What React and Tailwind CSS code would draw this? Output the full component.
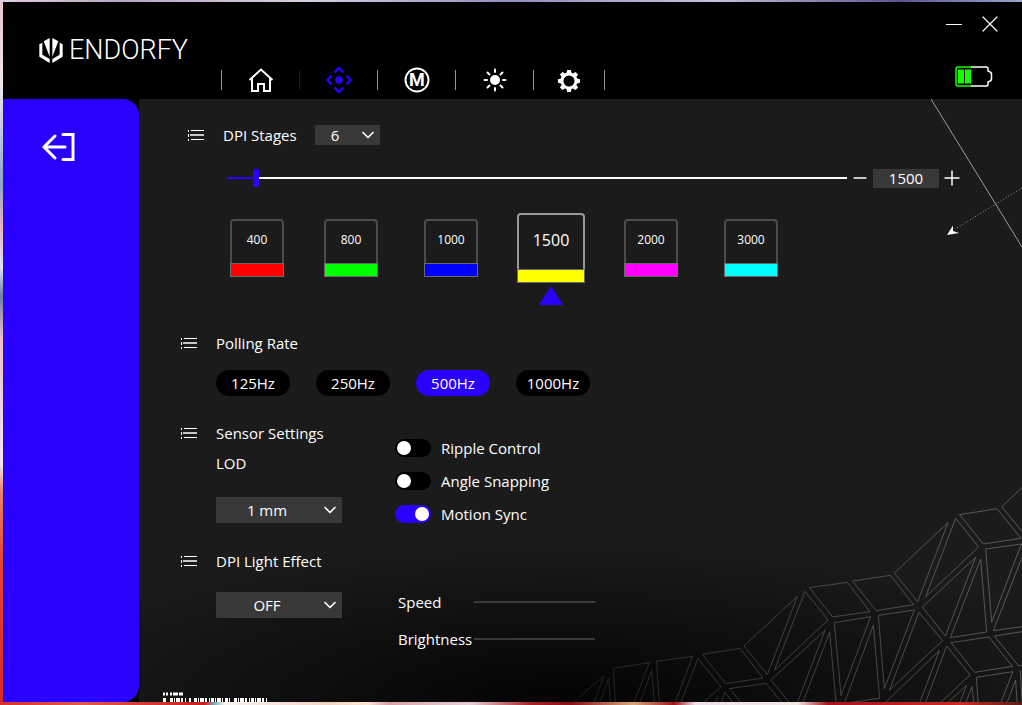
import { useState } from 'react';
import { ChevronDown, Minus, Plus, X } from 'lucide-react';
import clsx from 'clsx';

const STAGES = [
  { dpi: 400, color: 'bg-[#ff0000]' },
  { dpi: 800, color: 'bg-[#00ff00]' },
  { dpi: 1000, color: 'bg-[#0000ff]' },
  { dpi: 1500, color: 'bg-[#ffff00]' },
  { dpi: 2000, color: 'bg-[#ff00ff]' },
  { dpi: 3000, color: 'bg-[#00ffff]' },
];

const RATES = [125, 250, 500, 1000];

const SENSOR_OPTIONS = ['Ripple Control', 'Angle Snapping', 'Motion Sync'];

const TABS = [
  { id: 'home', label: 'Home', icon: HomeIcon, width: 'w-[77px]' },
  { id: 'dpi', label: 'DPI', icon: DpiIcon, width: 'w-[77px]' },
  { id: 'macro', label: 'Macro', icon: MacroIcon, width: 'w-[77px]' },
  { id: 'light', label: 'Lighting', icon: SunIcon, width: 'w-[77px]' },
  { id: 'settings', label: 'Settings', icon: GearIcon, width: 'w-[70px]' },
];

const MIN_DPI = 400;
const MAX_DPI = 26000;

export default function App() {
  const [tab, setTab] = useState('dpi');
  const [stageCount, setStageCount] = useState('6');
  const [stage, setStage] = useState(3);
  const [dpi, setDpi] = useState(1500);
  const [rate, setRate] = useState(500);
  const [sensor, setSensor] = useState({ 'Motion Sync': true });
  const [lod, setLod] = useState('1 mm');
  const [effect, setEffect] = useState('OFF');

  const pct = ((dpi - MIN_DPI) / (MAX_DPI - MIN_DPI)) * 100;

  const pickStage = (i) => {
    setStage(i);
    setDpi(STAGES[i].dpi);
  };

  return (
    <div className="flex min-h-screen flex-col font-['Open_Sans','Noto_Sans',sans-serif] text-[15px] leading-5 text-white">
      <div className="h-[2px] bg-[linear-gradient(to_right,#e0cfe0,#b7a6c4_12%,#d9cfe4_30%,#8f8fc0_50%,#c7c0dd_70%,#5a5590_88%,#9aa5d0)]" />
      <div className="flex flex-1">
        <div className="w-[3px] bg-[linear-gradient(to_bottom,#e9c6d8,#f0e6f0_12%,#8ea6cc_26%,#e7b3b8_32%,#dfe3f2_38%,#6f7fa8_42%,#ecc0c4_48%,#f3e6ec_66%,#e8836a_70%,#e2452e_80%,#d42a26)]" />

        <div className="flex min-w-0 flex-1 flex-col bg-black">
          {/* Header */}
          <header className="flex h-[97px] pl-9">
            <div className="flex items-center gap-1.5 self-start pt-8">
              <LogoMark />
              <span className="font-['Roboto',sans-serif] text-[27px] leading-8 font-light">ENDORFY</span>
            </div>

            <nav className="ml-[33px] flex items-center self-end pb-[5px]">
              {TABS.map(({ id, label, icon: Icon, width }) => (
                <div key={id} className="flex items-center">
                  <span className={clsx('h-5 w-px', id === tab ? 'bg-[#1f00b8]' : 'bg-[#969696]')} />
                  <button
                    type="button"
                    aria-label={label}
                    onClick={() => setTab(id)}
                    className={clsx('flex h-7 items-center justify-center', width, id === tab && 'text-[#2a00ff]')}
                  >
                    <Icon />
                  </button>
                </div>
              ))}
              <span className="h-5 w-px bg-[#969696]" />
            </nav>

            <div className="ml-auto flex flex-col items-end justify-between pt-3 pr-[22px] pb-3">
              <div className="flex gap-4">
                <button type="button" aria-label="Minimize">
                  <svg width="20" height="20" stroke="currentColor"><path d="M2 10.500h16" /></svg>
                </button>
                <button type="button" aria-label="Close">
                  <X size={28} strokeWidth={1.2} absoluteStrokeWidth className="-m-1" />
                </button>
              </div>
              <Battery />
            </div>
          </header>

          <div className="flex flex-1">
            <aside className="w-[136px] shrink-0 rounded-r-2xl bg-[#2a00ff] pt-[33px] pl-[38px]">
              <button type="button" aria-label="Back">
                <svg width="34" height="30" fill="none" stroke="currentColor" strokeWidth="3">
                  <path d="M24 15H3M14 4 3 15l11 11" strokeLinecap="round" />
                  <path d="M22 2.500h10v25H22" strokeLinecap="round" />
                </svg>
              </button>
            </aside>

            <main className="relative min-w-0 flex-1 bg-[#1b1b1b] bg-[radial-gradient(ellipse_65%_27%_at_48%_100%,#030303,#1b1b1b)] pt-[26px] pb-10">
              <Pointer />
              <Mesh />
              <Barcode />

              {/* DPI stages */}
              <section className="relative">
                <div className="flex items-center pl-[49px]">
                  <Heading>
                    <label htmlFor="stages">DPI Stages</label>
                  </Heading>
                  <Select
                    id="stages"
                    className="ml-[18px] h-5 w-[65px]"
                    value={stageCount}
                    onChange={setStageCount}
                    options={['1', '2', '3', '4', '5', '6']}
                  />
                </div>

                <div className="mt-[23px] flex h-5 items-center pr-[63px] pl-[88px]">
                  <input
                    type="range"
                    aria-label="DPI"
                    min={MIN_DPI}
                    max={MAX_DPI}
                    step={50}
                    value={dpi}
                    onChange={(e) => setDpi(Number(e.target.value))}
                    className="h-[2px] min-w-0 flex-1 appearance-none [&::-webkit-slider-thumb]:h-[18px] [&::-webkit-slider-thumb]:w-[6px] [&::-webkit-slider-thumb]:appearance-none [&::-webkit-slider-thumb]:rounded-[1px] [&::-webkit-slider-thumb]:bg-[#2a00ff]"
                    style={{ background: `linear-gradient(to right, #2a00ff ${pct}%, #fff ${pct}%)` }}
                  />
                  <button type="button" aria-label="Decrease DPI" className="ml-1" onClick={() => setDpi(dpi - 50)}>
                    <Minus size={20} strokeWidth={2} className="-m-px" />
                  </button>
                  <input
                    aria-label="DPI value"
                    value={dpi}
                    onChange={(e) => setDpi(Number(e.target.value) || 0)}
                    className="ml-1 h-[19px] w-[66px] bg-[#383838] text-center outline-none"
                  />
                  <button type="button" aria-label="Increase DPI" className="-mr-0.5 ml-1" onClick={() => setDpi(dpi + 50)}>
                    <Plus size={24} strokeWidth={1.5} className="-m-[3px]" />
                  </button>
                </div>

                <div className="mt-[25px] flex items-center pl-[74px]">
                  {STAGES.map((s, i) => (
                    <div key={s.dpi} className="relative flex w-[100px] justify-center first:w-[88px]">
                      <button
                        type="button"
                        onClick={() => pickStage(i)}
                        className={clsx(
                          'flex flex-col',
                          i === stage ? 'h-[70px] w-[68px] text-[16px]' : 'h-[58px] w-[54px] text-[12px]'
                        )}
                      >
                        <span
                          className={clsx(
                            'flex w-full flex-1 items-center justify-center rounded-t-[4px] border-2 border-b-0 pb-1',
                            i === stage ? 'border-[#999999]' : 'border-[#4c4c4c]'
                          )}
                        >
                          {s.dpi}
                        </span>
                        <span className={clsx('h-[14px] w-full border border-[#6b6b6b]', s.color)} />
                      </button>
                      {i === stage && (
                        <svg width="24" height="19" className="absolute top-full mt-[3px] fill-[#2a00ff]">
                          <path d="M12 0 24 19H0z" />
                        </svg>
                      )}
                    </div>
                  ))}
                </div>
              </section>

              {/* Polling rate */}
              <section className="relative mt-[50px] pl-[42px]">
                <Heading>Polling Rate</Heading>
                <div className="mt-[17px] flex gap-[26px] pl-[35px]">
                  {RATES.map((r) => (
                    <button
                      key={r}
                      type="button"
                      onClick={() => setRate(r)}
                      className={clsx('h-[26px] w-[74px] rounded-full', r === rate ? 'bg-[#2a00ff]' : 'bg-black')}
                    >
                      {r}Hz
                    </button>
                  ))}
                </div>
              </section>

              {/* Sensor */}
              <section className="relative mt-[27px] flex pl-[42px]">
                <div className="w-[214px]">
                  <Heading>Sensor Settings</Heading>
                  <div className="pl-[35px]">
                    <label htmlFor="lod" className="mt-[10px] block">LOD</label>
                    <Select
                      id="lod"
                      className="mt-6 h-[26px] w-[126px]"
                      value={lod}
                      onChange={setLod}
                      options={['1 mm', '2 mm']}
                    />
                  </div>
                </div>
                <div className="flex flex-col gap-[13px] pt-[15px]">
                  {SENSOR_OPTIONS.map((name) => (
                    <label key={name} className="flex h-5 items-center gap-[10px]">
                      <input
                        type="checkbox"
                        checked={!!sensor[name]}
                        onChange={(e) => setSensor({ ...sensor, [name]: e.target.checked })}
                        className="h-[18px] w-9 appearance-none rounded-full bg-black p-[2px] before:block before:size-[14px] before:rounded-full before:bg-white checked:bg-[#2a00ff] checked:before:ml-[18px]"
                      />
                      {name}
                    </label>
                  ))}
                </div>
              </section>

              {/* Light effect */}
              <section className="relative mt-[27px] pl-[42px]">
                <Heading>
                  <label htmlFor="effect">DPI Light Effect</label>
                </Heading>
                <div className="mt-[21px] flex pl-[35px]">
                  <Select
                    id="effect"
                    className="h-[26px] w-[126px]"
                    value={effect}
                    onChange={setEffect}
                    options={['OFF', 'Steady', 'Breathing']}
                  />
                  <div className="ml-14 flex flex-col gap-[17px]">
                    <EffectSlider id="speed" label="Speed" />
                    <EffectSlider id="brightness" label="Brightness" />
                  </div>
                </div>
              </section>
            </main>
          </div>
        </div>
      </div>
      <div className="h-[3px] bg-[linear-gradient(to_right,#d8302a,#e2574c_8%,#c8201c_20%,#7fb0bd_21%,#fbf3f0_22%,#f3d3c4_32%,#fbe6d4_36%,#d8a0a8_38%,#e6d0d4_46%,#a82024_52%,#8a1016_56%,#d9a878_62%,#a01418_66%,#ece0ea_68%,#f6e8e4_78%,#a8141c_81%,#cc2a22_94%,#5a2018)]" />
    </div>
  );
}

function Heading({ children }) {
  return (
    <h2 className="flex items-center gap-[19px]">
      <svg width="16" height="11" fill="currentColor">
        <path d="M0 0h1v2H0zM3 0h13v1H3zM0 4h1v3H0zM0 9h1v2H0zM3 9h13v1H3z" />
        <path d="M2 4h14v2H2z" opacity=".75" />
      </svg>
      {children}
    </h2>
  );
}

function Select({ id, value, onChange, options, className }) {
  return (
    <div className={clsx('relative', className)}>
      <select
        id={id}
        value={value}
        onChange={(e) => onChange(e.target.value)}
        className="size-full appearance-none bg-[#383838] pr-6 text-center outline-none"
      >
        {options.map((o) => (
          <option key={o}>{o}</option>
        ))}
      </select>
      <ChevronDown size={20} strokeWidth={2} className="pointer-events-none absolute inset-y-0 right-[2px] my-auto" />
    </div>
  );
}

function EffectSlider({ id, label }) {
  return (
    <div className="flex h-5 items-center">
      <label htmlFor={id} className="w-[76px]">{label}</label>
      <input
        id={id}
        type="range"
        disabled
        className="h-[2px] w-[121px] appearance-none bg-[#3a3a3a] [&::-webkit-slider-thumb]:size-0 [&::-webkit-slider-thumb]:appearance-none"
      />
    </div>
  );
}

function LogoMark() {
  return (
    <svg width="24" height="25" viewBox="0 0 70 75" fill="currentColor">
      <path d="M0 19 9 14v36l22 13v12L0 56zM13 10 31 0v56z" />
      <path d="M70 19 61 14v36L39 63v12l31-19zM57 10 39 0v56z" />
    </svg>
  );
}

function HomeIcon() {
  return (
    <svg width="26" height="26" fill="none" stroke="currentColor" strokeWidth="2">
      <path d="M1.500 13 13 2.500 24.500 13M4 11.500V24h6v-7h6v7h6V11.500" />
    </svg>
  );
}

function DpiIcon() {
  return (
    <svg width="26" height="28" fill="none" stroke="currentColor" strokeWidth="2.400">
      <path d="M8.500 6.500 13 2l4.500 4.500M8.500 21.500 13 26l4.500-4.500M5.500 9.500 1.500 14l4 4.500M20.500 9.500l4 4.500-4 4.500" />
      <circle cx="13" cy="14" r="3.800" fill="currentColor" stroke="none" />
    </svg>
  );
}

function MacroIcon() {
  return (
    <svg width="26" height="26">
      <circle cx="13" cy="13" r="11.500" fill="none" stroke="currentColor" strokeWidth="2" />
      <text x="13" y="19" textAnchor="middle" fill="currentColor" className="font-['Liberation_Sans_Narrow','Roboto',sans-serif] text-[18px] font-bold">
        M
      </text>
    </svg>
  );
}

function SunIcon() {
  return (
    <svg width="24" height="24" stroke="currentColor" strokeWidth="2" strokeLinecap="round">
      <circle cx="12" cy="12" r="5" fill="currentColor" stroke="none" />
      <path d="M12 1.500v2.500M12 20v2.500M1.500 12H4M20 12h2.500M4.500 4.500l2 2M17.500 17.500l2 2M4.500 19.500l2-2M17.500 6.500l2-2" />
    </svg>
  );
}

function GearIcon() {
  return (
    <svg width="24" height="24" viewBox="-12 -12 24 24" className="mt-0.5">
      <circle r="7" fill="none" stroke="currentColor" strokeWidth="3" />
      {[0, 45, 90, 135].map((a) => (
        <path key={a} d="M-2.500-8-1.800-11h3.600l.7 3zM-2.500 8l.7 3h3.600l.7-3z" fill="currentColor" transform={`rotate(${a})`} />
      ))}
    </svg>
  );
}

function Battery() {
  return (
    <svg width="38" height="21" fill="none" strokeWidth="1.500" className="mr-[7px]">
      <path d="M16 1h15.500q1.500 0 1.500 1.500V5q3.500 1 3.500 3v5q0 2-3.500 3v2.500q0 1.500-1.500 1.500H16" stroke="#fff" />
      <path d="M16 1H3Q1 1 1 3v15q0 2 2 2h13" stroke="#15ff00" />
      <path d="M3 3.500h6v14H3zM10 3.500h6v14h-6z" fill="#15ff00" />
    </svg>
  );
}

function Pointer() {
  return (
    <svg width="91" height="148" fill="none" className="pointer-events-none absolute top-0 right-0">
      <path d="M0 0 91 148" stroke="#9c9c9c" />
      <path d="M91 89 24 130" stroke="#9a9a9a" strokeDasharray="1 2" />
      <path d="M16 136 22 126.500V132l6 2z" fill="#fff" />
    </svg>
  );
}

// Low-poly wireframe in the bottom right corner
function Mesh() {
  return (
    <svg width="462" height="232" viewBox="0 0 1386 696" fill="none" className="pointer-events-none absolute right-0 bottom-0">
      <defs>
        <linearGradient id="mesh" gradientUnits="userSpaceOnUse" x1="0" y1="696" x2="1200" y2="100">
          <stop offset="0" stopColor="#1c1c1c" />
          <stop offset=".5" stopColor="#484848" />
          <stop offset="1" stopColor="#666666" />
        </linearGradient>
      </defs>
      <g stroke="url(#mesh)" strokeWidth="2.500">
        <path d="M40 698 131 618 103 696M120 696 146 625 151 696M166 696 160 595 268 578 223 696M240 696 275 603 283 696M298 696 289 574 398 559 346 696M363 696 414 565 483 650 432 696" />
        <path d="M427 553 540 535 609 624 497 641zM468 696 473 680M484 696 495 667 517 696M542 696 508 656 618 640 664 696" />
        <path d="M552 528 712 379 622 614zM735 364 804 450 643 601zM748 353 862 337 930 425 818 441zM878 333 991 316 1061 404 948 422z" />
        <path d="M713 696 795 481 633 630 686 696M729 696 809 487 828 696M823 458 932 440 843 677zM940 465 853 700 959 685zM955 436 1063 420 973 656zM1077 427 1148 512 988 661z" />
        <path d="M1003 309 1164 158 1073 395zM1187 145 1256 231 1097 380zM1199 134 1311 116 1383 205 1270 222zM1386 53 1325 110 1386 184" />
        <path d="M1087 411 1247 262 1156 498zM1262 267 1280 486 1171 503zM1277 237 1384 222 1295 457zM1386 262 1300 482 1386 470M1386 485 1303 498 1375 587 1386 586" />
        <path d="M1173 518 1287 501 1357 589 1244 607zM978 696 1138 542 1080 696M1097 696 1160 528 1230 615 1143 696M1165 696 1220 646 1200 696M1218 696 1236 650 1241 696" />
        <path d="M1254 696 1249 622 1359 605 1323 696M1342 696 1367 630 1371 696M1386 696 1381 601" />
      </g>
    </svg>
  );
}

function Barcode() {
  return (
    <svg width="106" height="10" fill="none" stroke="#fff" className="pointer-events-none absolute bottom-0 left-6">
      <path d="M0 2h5M7 2h13" strokeWidth="3" strokeDasharray="2 1 3 0" />
      <path d="M0 8h4M7 8h17M26 8h2M31 8h29M62 8h6M71 8h34" strokeWidth="4" strokeDasharray="3 1 1 1 4 1 2 2 1 1" />
    </svg>
  );
}
